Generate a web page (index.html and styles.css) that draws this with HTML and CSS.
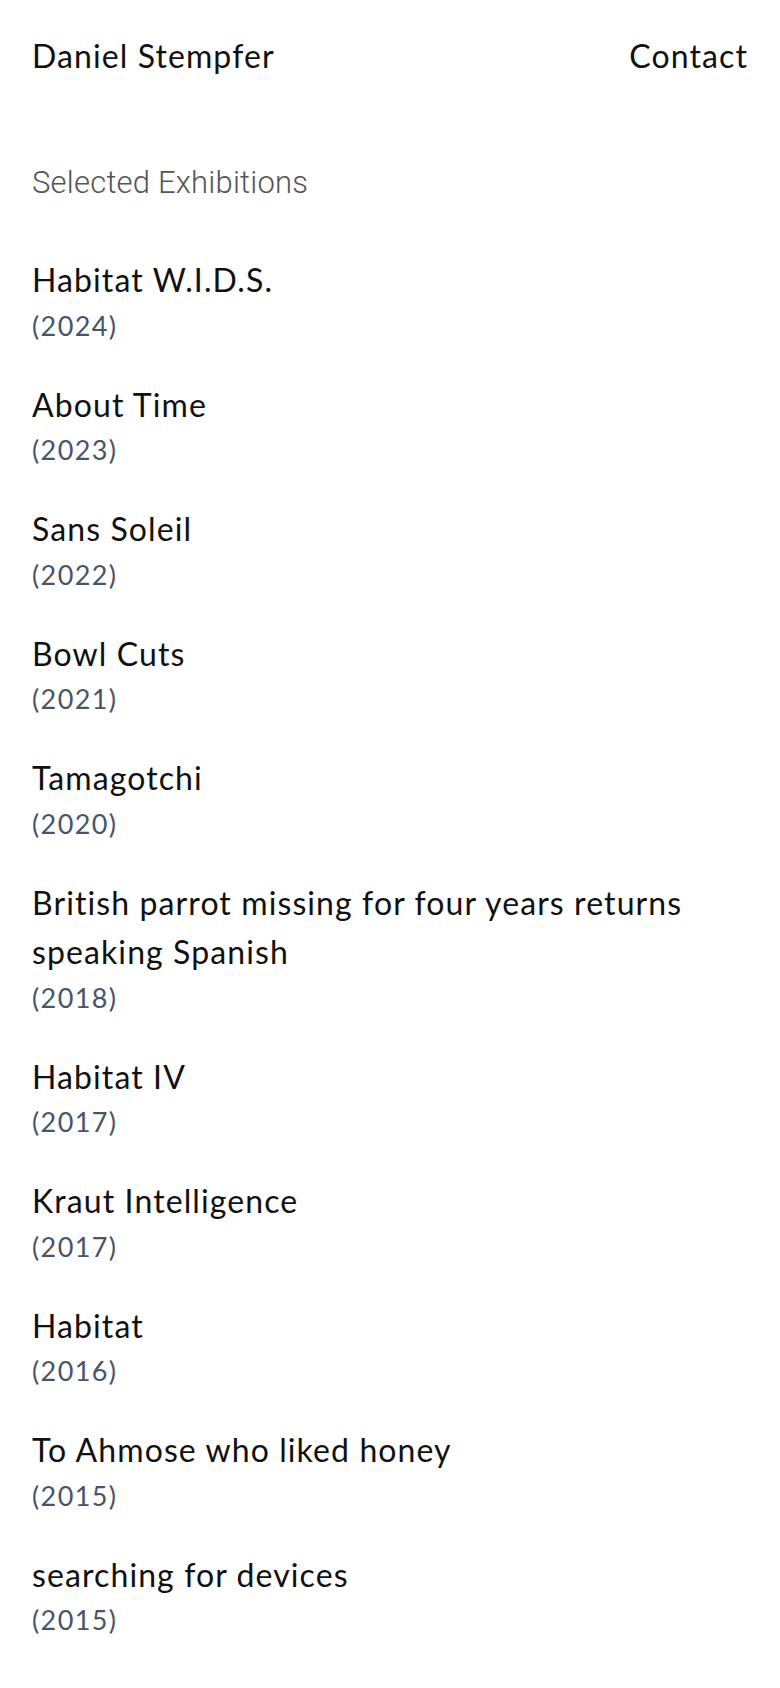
FILE: index.html
```html
<!DOCTYPE html>
<html lang="en">
<head>
    <meta charset="UTF-8">
    <meta name="viewport" content="width=device-width, initial-scale=1.0">
    <title>Daniel Stempfer - Exhibitions</title>
    <link rel="stylesheet" href="styles.css">
</head>
<body>
    <header class="site-header">
        <a class="site-name" href="#">Daniel Stempfer</a>
        <a class="site-link" href="#">Contact</a>
    </header>

    <main>
        <h1 class="page-title">Selected Exhibitions</h1>

        <ul class="exhibitions">
            <li><span class="ex-title">Habitat W.I.D.S.</span><span class="ex-year">(2024)</span></li>
            <li><span class="ex-title">About Time</span><span class="ex-year">(2023)</span></li>
            <li><span class="ex-title">Sans Soleil</span><span class="ex-year">(2022)</span></li>
            <li><span class="ex-title">Bowl Cuts</span><span class="ex-year">(2021)</span></li>
            <li><span class="ex-title">Tamagotchi</span><span class="ex-year">(2020)</span></li>
            <li><span class="ex-title">British parrot missing for four years returns speaking Spanish</span><span class="ex-year">(2018)</span></li>
            <li><span class="ex-title">Habitat IV</span><span class="ex-year">(2017)</span></li>
            <li><span class="ex-title">Kraut Intelligence</span><span class="ex-year">(2017)</span></li>
            <li><span class="ex-title">Habitat</span><span class="ex-year">(2016)</span></li>
            <li><span class="ex-title">To Ahmose who liked honey</span><span class="ex-year">(2015)</span></li>
            <li><span class="ex-title">searching for devices</span><span class="ex-year">(2015)</span></li>
        </ul>
    </main>
</body>
</html>
```

FILE: styles.css
```css
body {
    margin: 0;
    padding: 0 32px;
    background: #ffffff;
    color: #111111;
    font-family: Lato, "Open Sans", sans-serif;
}

a {
    color: inherit;
    text-decoration: none;
}

.site-header {
    display: flex;
    justify-content: space-between;
    align-items: center;
    padding-top: 36px;
    font-size: 32px;
    line-height: 40px;
    letter-spacing: 1.1px;
}

.page-title {
    margin: 87px 0 0;
    font-family: Roboto, sans-serif;
    font-weight: 300;
    font-size: 31px;
    line-height: 40px;
    letter-spacing: 0.2px;
    color: #555555;
}

.exhibitions {
    list-style: none;
    margin: 52px 0 0;
    padding: 0;
}

.exhibitions li {
    margin-bottom: 34px;
}

.ex-title {
    display: block;
    font-size: 32px;
    line-height: 49.5px;
    letter-spacing: 1.1px;
}

.ex-year {
    display: block;
    font-size: 27px;
    line-height: 41px;
    letter-spacing: 1.4px;
    color: #475569;
}
```
